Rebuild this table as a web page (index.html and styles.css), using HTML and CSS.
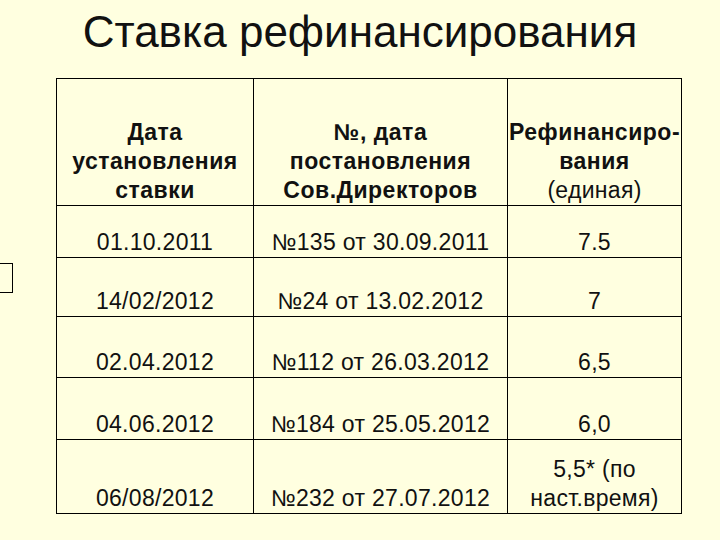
FILE: index.html
```html
<!DOCTYPE html>
<html lang="ru">
<head>
<meta charset="utf-8">
<title>Ставка рефинансирования</title>
<link rel="stylesheet" href="styles.css">
</head>
<body>
<div class="slide">
  <h1 class="title">Ставка рефинансирования</h1>
  <table class="rates">
    <tr class="row-head">
      <th>Дата<br>установления<br>ставки</th>
      <th>№, дата<br>постановления<br>Сов.Директоров</th>
      <th>Рефинансиро-<br>вания<br><span class="normal">(единая)</span></th>
    </tr>
    <tr class="row-1">
      <td>01.10.2011</td>
      <td>№135 от 30.09.2011</td>
      <td>7.5</td>
    </tr>
    <tr class="row-2">
      <td>14/02/2012</td>
      <td>№24 от 13.02.2012</td>
      <td>7</td>
    </tr>
    <tr class="row-3">
      <td>02.04.2012</td>
      <td>№112 от 26.03.2012</td>
      <td>6,5</td>
    </tr>
    <tr class="row-4">
      <td>04.06.2012</td>
      <td>№184 от 25.05.2012</td>
      <td>6,0</td>
    </tr>
    <tr class="row-5">
      <td>06/08/2012</td>
      <td>№232 от 27.07.2012</td>
      <td>5,5* (по<br>наст.время)</td>
    </tr>
  </table>
  <div class="stray-box"></div>
</div>
</body>
</html>
```
FILE: styles.css
```css
html, body {
  margin: 0;
  padding: 0;
  background: #ffffe0;
}
.slide {
  position: relative;
  width: 720px;
  height: 540px;
  overflow: hidden;
  background: #ffffe0;
  color: #000;
  font-family: "Liberation Sans", Arial, sans-serif;
}
.title {
  margin: 0;
  padding-top: 7px;
  font-size: 44px;
  font-weight: normal;
  line-height: 50px;
  text-align: center;
  color: #111;
}
.rates {
  margin: 21px 0 0 56px;
  width: 622px;
  border-collapse: collapse;
  table-layout: fixed;
  font-size: 23px;
  line-height: 29px;
  color: #111;
}
.rates th,
.rates td {
  border: 1px solid #000;
  padding: 0;
  vertical-align: bottom;
  text-align: center;
  white-space: nowrap;
  letter-spacing: 0.3px;
}
.rates th {
  font-weight: bold;
  letter-spacing: 0.5px;
}
.rates th:nth-child(1) { width: 196px; }
.rates th:nth-child(2) { width: 253px; }
.rates th:nth-child(3) { width: 173px; }
.normal { font-weight: normal; letter-spacing: 0.3px; }
.row-head { height: 127px; }
.row-1 { height: 52px; }
.row-2 { height: 59px; }
.row-3 { height: 61px; }
.row-4 { height: 62px; }
.row-5 { height: 74px; }
.stray-box {
  position: absolute;
  left: -2px;
  top: 263px;
  width: 13px;
  height: 28px;
  border: 1px solid #000;
}
```
